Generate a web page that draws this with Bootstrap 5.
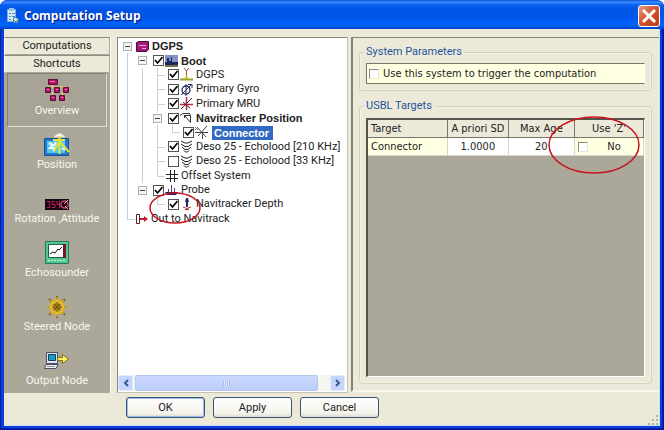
<!DOCTYPE html>
<html lang="en">
<head>
<meta charset="utf-8">
<meta name="viewport" content="width=device-width, initial-scale=1">
<title>Computation Setup</title>
<link href="https://cdn.jsdelivr.net/npm/bootstrap@5.3.0/dist/css/bootstrap.min.css" rel="stylesheet">
<style>
  body { font: 11px/14px Roboto, "Liberation Sans", Arial, sans-serif; color: #222; background: #fff; }
  svg { display: block; flex: none; }
  .win { background: #0a3fd6; padding: 0 4px 4px; border-radius: 7px 7px 0 0; box-shadow: inset 1px -1px 0 #0019a8, inset -2px -2px 0 #0019a8; }
  .titlebar { height: 29px; margin: 0 -4px; padding: 2px 4px 0 7px; border-radius: 7px 7px 0 0; background: linear-gradient(#0a4fd8 0, #3a8cff 2px, #0a5fee 5px, #0054e3 10px, #0059f0 20px, #0066ff 25px, #0040c8 29px); }
  .titlebar h1 { font: bold 12px/18px "Open Sans", "Noto Sans", sans-serif; color: #fff; text-shadow: 1px 1px 1px #0a1883; margin: 0; }
  .close-btn { width: 22px; height: 22px; padding: 0; border: 1px solid #fff; border-radius: 3px; background: linear-gradient(135deg, #e89a84, #d5502c 50%, #b93c18); }
  .client { background: #ece9d8; padding-top: 8px; min-height: 0; border: 0 solid #c4defa; border-width: 0 1px 1px 0; }
  .client main { min-height: 0; }
  .side { width: 107px; background: #aca899; border-right: 1px solid #fff; }
  .tab-btn { height: 18px; padding: 0; border: 1px solid; border-color: #8f8c7e #aaa798 #aca899 #fff; background: #ece9d8; color: #222; text-align: center; }
  .short { height: 54px; margin: 0 3px; padding: 3px 0 0; border: 1px solid transparent; background: none; color: #f7f6ef; flex: none; }
  .short.sel { border-color: #858274 #e0ddcf #e0ddcf #858274; background: #a8a495; }
  .short .pic { height: 27px; }
  .short span { line-height: 13px; white-space: nowrap; }
  .tree-pane { width: 231px; margin: 0 3px 0 6px; background: #fff; border: 1px solid #8c897b; border-right-color: #c5c2b2; border-bottom-color: #c5c2b2; }
  .tree { height: 187px; padding: 0 0 0 2px; margin: 1px 0 0; list-style: none; }
  .tree li { flex: 1 1 0; min-height: 0; white-space: nowrap; }
  .tree .fw-bold { font-family: "Liberation Sans", Arial, sans-serif; }
  .ind { width: 15px; flex: none; align-self: stretch; background: no-repeat; }
  .v { background-image: linear-gradient(#cfcfcf, #cfcfcf); background-size: 1px 100%; background-position: 7px 0; }
  .t { background-image: linear-gradient(#cfcfcf, #cfcfcf), linear-gradient(#cfcfcf, #cfcfcf); background-size: 1px 100%, 8px 1px; background-position: 7px 0, 7px 7px; }
  .l { background-image: linear-gradient(#cfcfcf, #cfcfcf), linear-gradient(#cfcfcf, #cfcfcf); background-size: 1px 8px, 8px 1px; background-position: 7px 0, 7px 7px; }
  .exp { width: 9px; height: 9px; padding: 0; margin: 3px; border: 1px solid #a9b0b8; background: linear-gradient(#444, #444) center / 5px 1px no-repeat #f5f4ef; }
  .ck { appearance: none; flex: none; width: 11px; height: 11px; margin: 0 0 0 3px; border: 1px solid #555; background: #fff; }
  .ck:checked { background: url("data:image/svg+xml,%3Csvg xmlns='http://www.w3.org/2000/svg' viewBox='0 0 9 9'%3E%3Cpath d='M1 4l2.5 3L8.5 1' fill='none' stroke='%23000' stroke-width='1.7'/%3E%3C/svg%3E") #fff; }
  .ico { margin: 0 3px 0 1px; }
  .pick { background: #316ac5; color: #fff; padding: 0 4px 0 2px; }
  .hbar { height: 16px; background: #f6f6f1; margin: 0 2px 1px 0; }
  .hbar button { width: 15px; padding: 0; border: 1px solid #e3ebff; border-radius: 2px; background: #c6d5fb; }
  .thumb { width: 183px; margin-left: 2px; border: 1px solid #b4c6f4; border-radius: 2px; background: linear-gradient(#cbd9ff, #bccdfb); }
  .grip { width: 7px; height: 5px; background: repeating-linear-gradient(90deg, #a9bcf0 0 1px, #dfe8ff 1px 2px); }
  .params { border: solid #858274; border-width: 1px 0 2px 2px; border-bottom-color: #f8f6ea; padding: 7px 7px 6px 6px; margin-bottom: 1px; }
  .group { border: 1px solid #d5d2c0; border-radius: 3px; box-shadow: inset 0 0 0 1px #f3f1e5; padding: 0 6px 6px; margin: 0; min-width: 0; }
  .group legend { font-size: 11px; line-height: 14px; color: #24549c; width: auto; float: none; padding: 0 2px; margin: 0 0 0 -2px; }
  .tah { font-family: "DejaVu Sans Condensed", "DejaVu Sans", sans-serif; color: #222; }
  .trigger { height: 21px; margin-top: 4px; padding-left: 2px; background: #ffffe1; border: 1px solid; border-color: #77756a #fff #77756a #77756a; }
  .flat { border-color: #8b897c #e8e6d4 #e8e6d4 #8b897c; width: 10px; height: 10px; margin: 0; }
  .well { background: #aca899; border: solid #55534a; border-width: 2px 1px 1px 2px; border-right-color: #fff; border-bottom-color: #fff; margin-top: 5px; }
  .targets { table-layout: fixed; margin: 0; width: 100%; border-collapse: separate; border-spacing: 0; text-align: center; color: #222; }
  .targets th, .targets td { height: 18px; padding: 0 3px; line-height: 16px; border: solid #aca899; border-width: 0 1px 1px 0; font-weight: normal; white-space: nowrap; }
  .targets th { background: #ece9d8; border-color: #77756a; }
  .targets td { background: #fff; border-color: #d8d5c6; }
  .targets .yel { background: #ffffe1; }
  .ring { position: absolute; pointer-events: none; z-index: 2; }
  .ring-probe { left: 28px; top: -6px; }
  .ring-z { left: -28px; top: -23px; }
  .foot { height: 32px; padding: 4px 1px 0 122px; gap: 8px; }
  .xp { width: 79px; height: 21px; padding: 0; font-size: 11px; line-height: 15px; color: #222; border: 1px solid #385872; border-radius: 3px; background: linear-gradient(#fff, #f4f3ec 80%, #dedbd0); }
  .xp:first-child { box-shadow: inset 0 0 0 1px #9dbcf0; }
</style>
<script src="https://cdn.jsdelivr.net/npm/bootstrap@5.3.0/dist/js/bootstrap.bundle.min.js"></script>
</head>
<body>
<svg width="0" height="0" class="position-absolute" aria-hidden="true">
  <defs>
    <g id="i-sonar" fill="none" stroke="#222"><path d="M1 1l4 2h3l4-2M1 4l4 2.500h3L12 4M2 7l3 2.500h3L11 7M4 10.500l1.500 1.500h2L9 10.500"/></g>
  </defs>
</svg>
<div class="win vh-100 d-flex flex-column overflow-hidden">
  <header class="titlebar d-flex align-items-center flex-shrink-0">
    <svg width="13" height="16" viewBox="0 0 13 16"><path fill="#d8ecf8" stroke="#7fb0dc" d="M.5 1.500h8v12h-8z"/><path fill="#8fc6e8" d="M2 0h5v3H2z"/><path stroke="#3f88c4" d="M2 5.500h2M5 5.500h3M2 8.500h2M5 8.500h3M2 11.500h2"/><path fill="#fff" stroke="#4787ba" d="M6.500 9.500l5 1-1 4.500-4-1z"/><path fill="none" stroke="#308040" d="M7 12l2 2 3-4"/></svg>
    <h1 class="ms-1">Computation Setup</h1>
    <button class="close-btn ms-auto d-flex align-items-center justify-content-center" type="button" aria-label="Close">
      <svg width="16" height="16" viewBox="0 0 16 16"><path d="M2 2l12 12M14 2L2 14" stroke="#fff" stroke-width="3"/></svg>
    </button>
  </header>

  <div class="client d-flex flex-column flex-grow-1">
    <main class="d-flex flex-grow-1">
      <nav class="side d-flex flex-column flex-shrink-0 overflow-hidden" aria-label="Shortcuts">
        <button class="tab-btn flex-shrink-0" type="button">Computations</button>
        <button class="tab-btn flex-shrink-0" type="button">Shortcuts</button>
        <button class="short sel d-flex flex-column align-items-center" type="button">
          <div class="pic d-flex align-items-center"><svg width="25" height="23" viewBox="0 0 25 23"><path d="M7.500 4v4M3.500 8h18M7.500 13v4M17.500 13v4" stroke="#eadb60" fill="none"/><g fill="#b5126a" stroke="#5f0d3b"><path d="M3.500.5h9v5h-9zM.5 8.500h5v5h-5zM9.500 8.500h5v5h-5zM18.500 8.500h5v5h-5zM5.500 16.500h5v5h-5zM14.500 16.500h5v5h-5z"/></g><path d="M5 2.500h5M2 10.500h2M11 10.500h2M20 10.500h2M7 18.500h2M16 18.500h2" stroke="#f57bc0"/></svg></div>
          <span>Overview</span></button>
        <button class="short d-flex flex-column align-items-center" type="button">
          <div class="pic d-flex align-items-center"><svg width="26" height="24" viewBox="0 0 26 24"><path fill="#2478d4" stroke="#155098" d="M.5 5.500h24v17H.5z"/><path fill="#57c8ea" d="M3 8h18v12H3z"/><path d="M5 10l4 2-3 3h5l-2 3M12 9l-2 4M18 15l3 2" fill="none" stroke="#e9fbff" stroke-width="2"/><path fill="#f6f7f2" stroke="#d8d8cf" d="M10 4q5-7 11 0z"/><path d="M15.500 3v18M9 7h12M15 9l-5 9M16 9l9 10" stroke="#e6e336" stroke-width="2" fill="none"/></svg></div>
          <span>Position</span></button>
        <button class="short d-flex flex-column align-items-center" type="button">
          <div class="pic d-flex align-items-end"><svg width="27" height="15" viewBox="0 0 27 15"><path fill="#180610" stroke="#aaa6a4" d="M.5 1.500h25v12H.5z"/><path d="M3 4.500h3l-1 3 1 3H3M11 4.500H8v3h3v3H8M13 4v3.500h3M15.500 4v7" fill="none" stroke="#b51e55"/><circle cx="20.500" cy="7.500" r="3.500" fill="none" stroke="#c04a70" stroke-width="1.500"/><path d="M20 7l4-4M21 9l3 3" stroke="#e3a8ba"/></svg></div>
          <span>Rotation ,Attitude</span></button>
        <button class="short d-flex flex-column align-items-center" type="button">
          <div class="pic d-flex align-items-center"><svg width="25" height="24" viewBox="0 0 25 24"><path fill="#55c890" stroke="#22775a" d="M.5.5h23v22H.5z"/><path fill="#fff" stroke="#1b5f4b" d="M3.500 3.500h17v13h-17z"/><path fill="#7b1622" d="M18 3h3v14h-3z"/><path fill="none" stroke="#111" d="M5 13l3-2 2 1 3-4 1 1 3-3"/><path stroke="#c9f3dc" d="M3 19.500h18" stroke-dasharray="2 1"/></svg></div>
          <span>Echosounder</span></button>
        <button class="short d-flex flex-column align-items-center" type="button">
          <div class="pic d-flex align-items-center"><svg width="22" height="22" viewBox="0 0 22 22"><path d="M11 0v22M1 11h20M3 3l16 16M19 3L3 19" stroke="#8a6708" stroke-width="2"/><circle cx="11" cy="11" r="6" fill="none" stroke="#e2b41e" stroke-width="3"/><path d="M11 1v20M1 11h20M4 4l14 14M18 4L4 18" stroke="#f5cc3a"/><path d="M11 6v10M6 11h10M8 8l6 6M14 8l-6 6" stroke="#775606"/></svg></div>
          <span>Steered Node</span></button>
        <button class="short d-flex flex-column align-items-center" type="button">
          <div class="pic d-flex align-items-center"><svg width="26" height="18" viewBox="0 0 26 18"><path fill="#e4e6ee" stroke="#4b5068" d="M2.500.5h11v11h-11z"/><path fill="#1c9cc4" stroke="#12405e" d="M4.500 2.500h7v6h-7z"/><path fill="#f2f2f5" stroke="#4b5068" d="M2 12.500h12l-2 4H.5z"/><path stroke="#8a90a5" d="M3 14.500h8"/><path fill="#fff06a" stroke="#85700c" d="M13.500 5.500h5v-3l6 4.500-6 4.500v-3h-5z"/></svg></div>
          <span>Output Node</span></button>
      </nav>

      <section class="tree-pane d-flex flex-column flex-shrink-0 justify-content-between">
        <ul class="tree d-flex flex-column">
          <li class="d-flex align-items-center"><button class="exp" type="button" aria-label="Collapse DGPS"></button>
            <svg class="ico" width="13" height="11" viewBox="0 0 13 11"><path fill="#a01878" stroke="#4b0a3b" d="M.5 1.500l2-1h10v8l-2 2H.5z"/><path d="M3 4.500h7M6 7.500h4" stroke="#f2a3d9"/></svg><span class="fw-bold">DGPS</span></li>
          <li class="d-flex align-items-center"><i class="ind v"></i><button class="exp" type="button" aria-label="Collapse Boot"></button><input class="ck" type="checkbox" id="c1" checked>
            <svg class="ico" width="13" height="12" viewBox="0 0 13 12"><path fill="#8391c7" d="M0 0h13v12H0z"/><path fill="#1c2757" d="M0 7h2V3h2v3h2V2h1v5h6v3H0z"/><path fill="#777544" d="M0 10h13v2H0z"/></svg><label for="c1" class="fw-bold">Boot</label></li>
          <li class="d-flex align-items-center"><i class="ind v"></i><i class="ind v"></i><i class="ind t"></i><input class="ck" type="checkbox" id="c2" checked>
            <svg class="ico" width="13" height="13" viewBox="0 0 13 13"><path d="M4 0l2.500 3L9 0M6.500 3v6" stroke="#a84a48" fill="none"/><path d="M0 11.500h13" stroke="#96a32a" stroke-width="2"/><path fill="#d0c43a" d="M4 11l2.500-4L9 11z"/></svg><label for="c2">DGPS</label></li>
          <li class="d-flex align-items-center"><i class="ind v"></i><i class="ind v"></i><i class="ind t"></i><input class="ck" type="checkbox" id="c3" checked>
            <svg class="ico" width="13" height="13" viewBox="0 0 13 13"><circle cx="6" cy="7" r="4" fill="none" stroke="#222a66" stroke-width="1.300"/><path d="M6 1v12M1 12L11 2M8 1.500h4V5" fill="none" stroke="#222a66"/></svg><label for="c3">Primary Gyro</label></li>
          <li class="d-flex align-items-center"><i class="ind v"></i><i class="ind v"></i><i class="ind t"></i><input class="ck" type="checkbox" id="c4" checked>
            <svg class="ico" width="13" height="13" viewBox="0 0 13 13"><path d="M0 7.500h13M6.500 0v13" stroke="#c02840" stroke-width="1.500"/><path d="M1 12L12 1M3 5l7 6" stroke="#4b2333" fill="none"/></svg><label for="c4">Primary MRU</label></li>
          <li class="d-flex align-items-center"><i class="ind v"></i><i class="ind v"></i><button class="exp" type="button" aria-label="Collapse Navitracker Position"></button><input class="ck" type="checkbox" id="c5" checked>
            <svg class="ico" width="13" height="12" viewBox="0 0 13 12"><path d="M0 3.500L3 1.500h6M4.500 3v3M4.500 3.500h6v7zM9 1l1.500 2" fill="none" stroke="#333"/></svg><label for="c5" class="fw-bold">Navitracker Position</label></li>
          <li class="d-flex align-items-center"><i class="ind v"></i><i class="ind v"></i><i class="ind v"></i><i class="ind l"></i><input class="ck" type="checkbox" id="c6" checked>
            <svg class="ico me-0" width="13" height="13" viewBox="0 0 13 13"><path d="M0 6.500h13M7.500 6v7M2 1l9 10M12 0L3 10" stroke="#444" fill="none"/><path d="M0 1l3 3M3 1L0 4" stroke="#777"/></svg><label for="c6" class="fw-bold pick ms-1">Connector</label></li>
          <li class="d-flex align-items-center"><i class="ind v"></i><i class="ind v"></i><i class="ind t"></i><input class="ck" type="checkbox" id="c7" checked>
            <svg class="ico" width="13" height="13" viewBox="0 0 13 13"><use href="#i-sonar"/></svg><label for="c7">Deso 25 - Echolood [210 KHz]</label></li>
          <li class="d-flex align-items-center"><i class="ind v"></i><i class="ind v"></i><i class="ind t"></i><input class="ck" type="checkbox" id="c8">
            <svg class="ico" width="13" height="13" viewBox="0 0 13 13"><use href="#i-sonar"/></svg><label for="c8">Deso 25 - Echolood [33 KHz]</label></li>
          <li class="d-flex align-items-center"><i class="ind v"></i><i class="ind v"></i><i class="ind l"></i>
            <svg class="ico" width="12" height="12" viewBox="0 0 12 12"><path d="M0 4.500h12M0 8.500h12M4.500 0v12M8.500 0v12" stroke="#222"/></svg><span>Offset System</span></li>
          <li class="d-flex align-items-center"><i class="ind v"></i><button class="exp" type="button" aria-label="Collapse Probe"></button><input class="ck" type="checkbox" id="c9" checked>
            <svg class="ico" width="13" height="12" viewBox="0 0 13 12"><path d="M3.500 8V5M6.500 8V1M9.500 8V4" stroke="#5b3b6b"/><path fill="#171d66" d="M0 8h13l-2 3H2z"/></svg><label for="c9">Probe</label></li>
          <li class="d-flex align-items-center position-relative"><i class="ind v"></i><i class="ind"></i><i class="ind l"></i><input class="ck" type="checkbox" id="c10" checked>
            <svg class="ico" width="13" height="13" viewBox="0 0 13 13"><path fill="#222a66" d="M6 0h2l1 4H8v5H6V4H5z"/><path d="M3 9q4 3 8 0M5 11.500h4" stroke="#b33" fill="none"/></svg><label for="c10">Navitracker Depth</label>
            <svg class="ring ring-probe" width="54" height="34" viewBox="0 0 54 34"><ellipse cx="27" cy="17" rx="25" ry="15" fill="none" stroke="#c8141e" stroke-width="1.500"/></svg></li>
          <li class="d-flex align-items-center"><i class="ind l"></i>
            <svg class="ico" width="12" height="10" viewBox="0 0 12 10"><path d="M.5.5h3v9h-3z" fill="#fff" stroke="#5c1c24"/><path d="M4 5h5" stroke="#c41e38" stroke-width="2"/><path fill="#c41e38" d="M8 2l4 3-4 3z"/></svg><span>Out to Navitrack</span></li>
        </ul>
        <div class="hbar d-flex">
          <button type="button" aria-label="Scroll left" class="d-flex align-items-center justify-content-center"><svg width="6" height="8" viewBox="0 0 6 8"><path d="M5 1L2 4l3 3" fill="none" stroke="#3a5692" stroke-width="2"/></svg></button>
          <div class="thumb d-flex align-items-center justify-content-center"><div class="grip"></div></div>
          <button type="button" aria-label="Scroll right" class="ms-auto d-flex align-items-center justify-content-center"><svg width="6" height="8" viewBox="0 0 6 8"><path d="M1 1l3 3-3 3" fill="none" stroke="#3a5692" stroke-width="2"/></svg></button>
        </div>
      </section>

      <section class="params flex-grow-1 d-flex flex-column">
        <fieldset class="group flex-shrink-0">
          <legend>System Parameters</legend>
          <div class="trigger tah d-flex align-items-center"><input class="ck flat" type="checkbox" id="trig"><label for="trig" class="ps-1 text-nowrap">Use this system to trigger the computation</label></div>
        </fieldset>
        <fieldset class="group mt-2 flex-grow-1 d-flex flex-column">
          <legend>USBL Targets</legend>
          <div class="well flex-grow-1">
            <table class="targets tah">
              <colgroup><col style="width:29%"><col style="width:22%"><col style="width:24%"><col style="width:25%"></colgroup>
              <thead><tr><th class="text-start">Target</th><th>A priori SD</th><th>Max Age</th><th>Use 'Z'</th></tr></thead>
              <tbody><tr><td class="text-start yel">Connector</td><td>1.0000</td><td>20</td>
                <td class="yel position-relative"><div class="d-flex align-items-center"><input class="ck flat" type="checkbox" id="usez"><label for="usez" class="flex-grow-1">No</label></div>
                <svg class="ring ring-z" width="94" height="60" viewBox="0 0 94 60"><ellipse cx="47" cy="30" rx="45" ry="28" fill="none" stroke="#c8141e" stroke-width="1.500"/></svg></td></tr></tbody>
            </table>
          </div>
        </fieldset>
      </section>
    </main>
    <footer class="foot d-flex flex-shrink-0">
      <button class="xp" type="button">OK</button>
      <button class="xp" type="button">Apply</button>
      <button class="xp" type="button">Cancel</button>
      <svg class="ms-auto align-self-end" width="10" height="10" viewBox="0 0 10 10"><path fill="#b8b4a2" d="M8 0h2v2H8zM4 4h2v2H4zM8 4h2v2H8zM0 8h2v2H0zM4 8h2v2H4zM8 8h2v2H8z"/></svg>
    </footer>
  </div>
</div>
</body>
</html>
